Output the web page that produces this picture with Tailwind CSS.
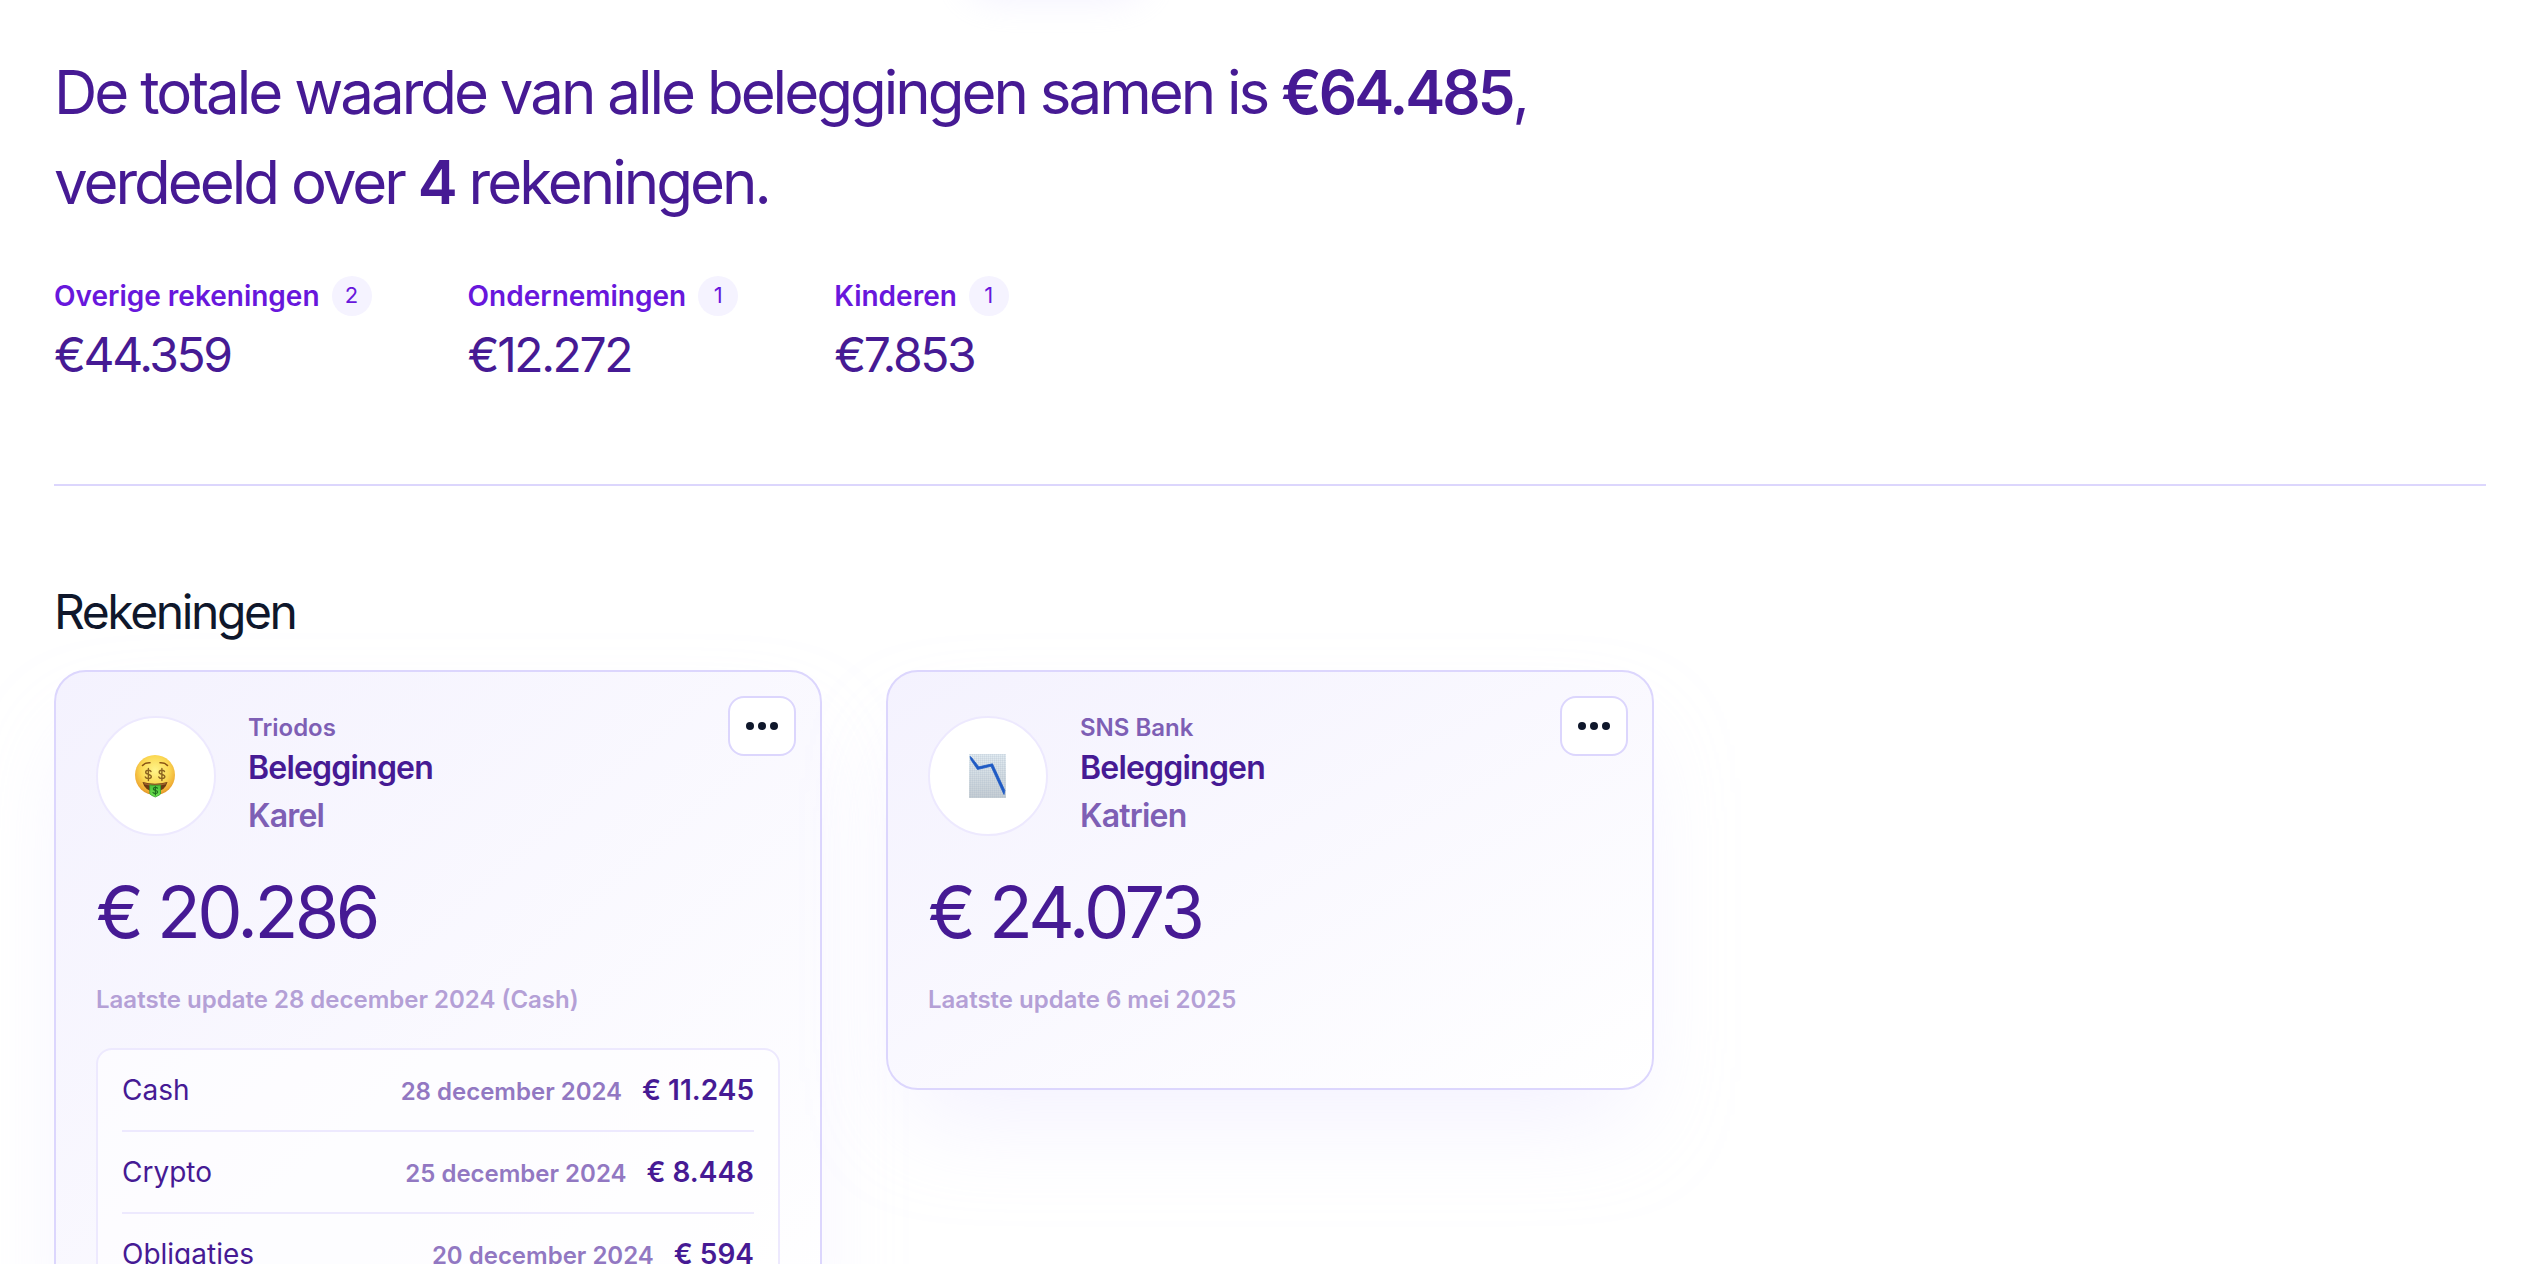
<!DOCTYPE html>
<html lang="nl">
<head>
<meta charset="utf-8">
<meta name="viewport" content="width=device-width, initial-scale=1">
<title>Beleggingen</title>
<script src="https://cdn.jsdelivr.net/npm/@tailwindcss/browser@4"></script>
</head>
<body class="relative min-h-screen overflow-x-hidden bg-white pr-14 pl-[54px] pt-[47px] font-['Inter',sans-serif] text-[#461a94] antialiased">
<!-- shadow of the floating navigation pill above the fold -->
<div class="absolute -top-20 left-[960px] h-16 w-48 rounded-full shadow-[0_20px_40px_-8px_#ddd6fe66]"></div>

<header>
  <h1 class="max-w-[1600px] text-[60px] leading-[90px] tracking-tighter">De totale waarde van alle beleggingen samen is <strong class="font-semibold">€64.485</strong>,<br>verdeeld over <strong class="font-semibold">4</strong> rekeningen.</h1>
  <dl class="mt-[49px] flex flex-wrap gap-x-24 gap-y-8">
    <div>
      <dt class="flex items-center gap-3 text-[28px] leading-10 font-semibold text-[#6817dc]">Overige rekeningen <span class="flex size-10 items-center justify-center rounded-full bg-violet-50 pb-0.5 text-[22px] font-normal">2</span></dt>
      <dd class="text-5xl leading-[78px] tracking-tighter">€44.359</dd>
    </div>
    <div>
      <dt class="flex items-center gap-3 text-[28px] leading-10 font-semibold text-[#6817dc]">Ondernemingen <span class="flex size-10 items-center justify-center rounded-full bg-violet-50 pb-0.5 text-[22px] font-normal">1</span></dt>
      <dd class="text-5xl leading-[78px] tracking-tighter">€12.272</dd>
    </div>
    <div>
      <dt class="flex items-center gap-3 text-[28px] leading-10 font-semibold text-[#6817dc]">Kinderen <span class="flex size-10 items-center justify-center rounded-full bg-violet-50 pb-0.5 text-[22px] font-normal">1</span></dt>
      <dd class="text-5xl leading-[78px] tracking-tighter">€7.853</dd>
    </div>
  </dl>
</header>

<hr class="mt-[90px] border-t-2 border-[#dcd6fd]">

<main class="mt-24 pb-20">
  <h2 class="text-5xl leading-[60px] tracking-tighter text-slate-900">Rekeningen</h2>
  <div class="mt-7 grid grid-cols-3 items-start gap-16">

    <article class="relative rounded-[32px] border-2 border-[#dcd6fd] bg-linear-to-br from-[#f4f2fe] to-white p-10 shadow-[0_50px_100px_-24px_#ddd6fe59]">
      <button type="button" aria-label="Meer opties" class="absolute top-6 right-6 flex h-15 w-17 items-center justify-center rounded-2xl border-2 border-[#dcd6fd] bg-white text-slate-900">
        <svg class="h-2 w-8" viewBox="0 0 32 8" fill="currentColor"><circle cx="4" cy="4" r="4"/><circle cx="16" cy="4" r="4"/><circle cx="28" cy="4" r="4"/></svg>
      </button>
      <div class="flex items-center gap-8">
        <div class="flex size-30 items-center justify-center rounded-full border-2 border-violet-100 bg-white">
          <!-- money-mouth face -->
          <svg class="size-11" viewBox="0 0 44 44" fill="none" stroke-linecap="round" stroke-linejoin="round">
            <defs>
              <radialGradient id="face" cx=".5" cy=".38" r=".64"><stop offset="0" stop-color="#fff48a"/><stop offset=".55" stop-color="#fbd954"/><stop offset=".85" stop-color="#f0ae35"/><stop offset="1" stop-color="#dc8a24"/></radialGradient>
              <linearGradient id="note" x1="0" y1="0" x2="0" y2="1"><stop offset="0" stop-color="#4cc23a"/><stop offset="1" stop-color="#6fe352"/></linearGradient>
            </defs>
            <circle cx="21" cy="21" r="20" fill="url(#face)"/>
            <path d="M8.500 11.500Q11 8.500 16 8.800M26 8.800Q31 8.500 33.500 11.500" stroke="#8a5415" stroke-width="1.600"/>
            <path id="dollar" d="M17 17.500C16.500 15.800 11.700 15.600 11.700 18.200C11.700 21 17.300 19.600 17.300 22.600C17.300 25.300 12 25.200 11.300 23M14.400 14.500V26.500" stroke="#8c6420" stroke-width="1.400"/>
            <use href="#dollar" x="13.500"/>
            <path d="M8.500 28Q21 31.500 33.500 28Q31 37.500 21 37.500Q11 37.500 8.500 28Z" fill="#6b3a12"/>
            <path d="M10 28.800Q21 31.800 32 28.800L31.500 30.500Q21 33 10.500 30.500Z" fill="#a0632a"/>
            <path d="M16 31Q21 32 26.500 31V40Q26 41 21.300 43Q17 41.500 16 40Z" fill="url(#note)" stroke="#35a52c" stroke-width=".8"/>
            <path d="M23.500 34.300C22.800 32.900 19.200 33 19.300 34.900C19.400 37 23.600 36 23.600 38C23.600 40 19.800 39.900 19 38.500M21.400 32.500V41" stroke="#1d6b1d" stroke-width="1.100"/>
          </svg>
        </div>
        <div>
          <p class="text-2xl leading-8 font-semibold text-[#7e5fb5]">Triodos</p>
          <h3 class="text-[32px] leading-12 font-semibold tracking-tight">Beleggingen</h3>
          <p class="text-[32px] leading-12 font-semibold tracking-tight text-[#7e5fb5]">Karel</p>
        </div>
      </div>
      <p class="mt-8 text-7xl leading-20 tracking-tighter">€ 20.286</p>
      <p class="mt-8 text-2xl leading-8 font-semibold text-[#b4a0d6]">Laatste update 28 december 2024 (Cash)</p>
      <ul class="mt-8 divide-y-2 divide-violet-100 rounded-2xl border-2 border-violet-100 bg-white/60 px-6">
        <li class="flex items-baseline gap-5 text-[28px] leading-20"><span class="mr-auto">Cash</span><span class="text-2xl leading-8 font-semibold text-[#9278c2]">28 december 2024</span><span class="font-semibold">€ 11.245</span></li>
        <li class="flex items-baseline gap-5 text-[28px] leading-20"><span class="mr-auto">Crypto</span><span class="text-2xl leading-8 font-semibold text-[#9278c2]">25 december 2024</span><span class="font-semibold">€ 8.448</span></li>
        <li class="flex items-baseline gap-5 text-[28px] leading-20"><span class="mr-auto">Obligaties</span><span class="text-2xl leading-8 font-semibold text-[#9278c2]">20 december 2024</span><span class="font-semibold">€ 594</span></li>
      </ul>
    </article>

    <article class="relative rounded-[32px] border-2 border-[#dcd6fd] bg-linear-to-br from-[#f4f2fe] to-white p-10 shadow-[0_50px_100px_-24px_#ddd6fe59]">
      <button type="button" aria-label="Meer opties" class="absolute top-6 right-6 flex h-15 w-17 items-center justify-center rounded-2xl border-2 border-[#dcd6fd] bg-white text-slate-900">
        <svg class="h-2 w-8" viewBox="0 0 32 8" fill="currentColor"><circle cx="4" cy="4" r="4"/><circle cx="16" cy="4" r="4"/><circle cx="28" cy="4" r="4"/></svg>
      </button>
      <div class="flex items-center gap-8">
        <div class="flex size-30 items-center justify-center rounded-full border-2 border-violet-100 bg-white">
          <!-- chart with falling line -->
          <svg class="size-11" viewBox="0 0 44 44" fill="none">
            <defs>
              <linearGradient id="paper" x1="0" y1="0" x2="0" y2="1"><stop offset="0" stop-color="#e3ecf2"/><stop offset="1" stop-color="#c6ced4"/></linearGradient>
              <pattern id="grid" width="2" height="2" patternUnits="userSpaceOnUse"><path d="M0 .5H2M.5 0V2" stroke="#9fb2c0" stroke-opacity=".3" stroke-width=".6"/></pattern>
            </defs>
            <rect x="3" width="37" height="44" fill="url(#paper)"/>
            <rect x="3" width="37" height="44" fill="url(#grid)"/>
            <path d="M4 2.500L5.500 3.500L12.800 12.800L26.500 9.800L38.800 36.500L38 40.500L25 12.300L11.500 15.500L5 6Z" fill="#1f5ac4" stroke="#1f5ac4" stroke-width=".8" stroke-linejoin="round"/>
          </svg>
        </div>
        <div>
          <p class="text-2xl leading-8 font-semibold text-[#7e5fb5]">SNS Bank</p>
          <h3 class="text-[32px] leading-12 font-semibold tracking-tight">Beleggingen</h3>
          <p class="text-[32px] leading-12 font-semibold tracking-tight text-[#7e5fb5]">Katrien</p>
        </div>
      </div>
      <p class="mt-8 text-7xl leading-20 tracking-tighter">€ 24.073</p>
      <p class="mt-8 mb-8 text-2xl leading-8 font-semibold text-[#b4a0d6]">Laatste update 6 mei 2025</p>
    </article>
  </div>
</main>
</body>
</html>
